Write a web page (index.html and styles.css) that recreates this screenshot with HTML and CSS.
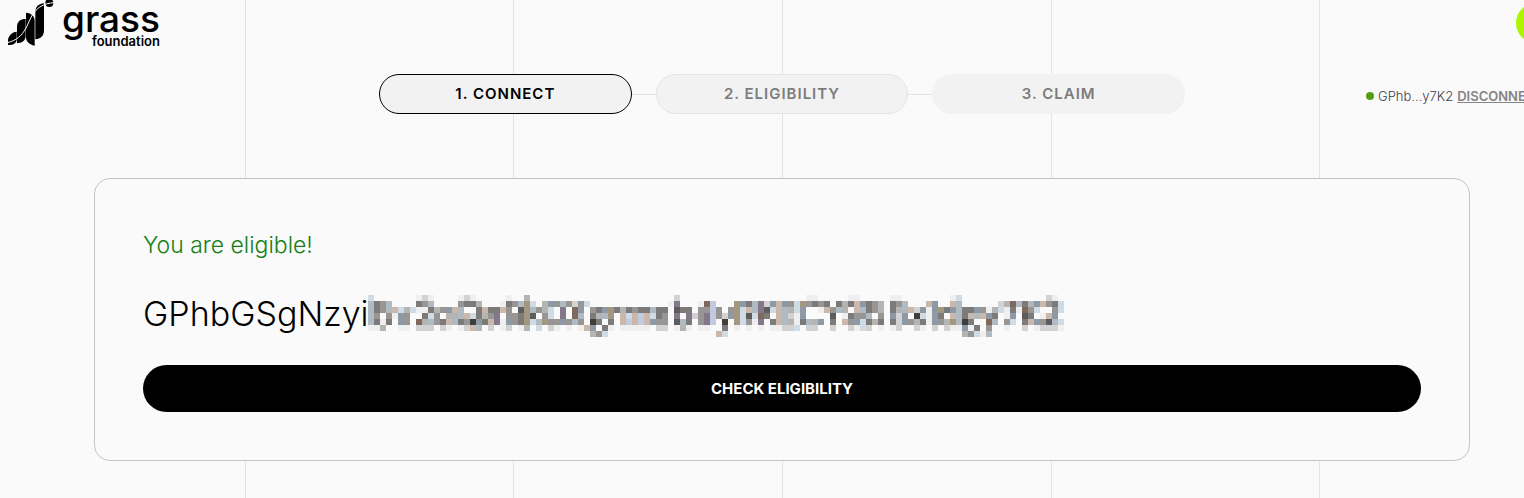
FILE: index.html
```
<!DOCTYPE html>
<html lang="en">
<head>
<meta charset="utf-8">
<title>Grass Foundation</title>
<meta name="viewport" content="width=device-width, initial-scale=1">
<link rel="stylesheet" href="styles.css">
</head>

<body>
<div class="page">

<!--background lines-->
<div class="grid-lines">
	<span></span><span></span><span></span><span></span><span></span><span></span>
</div>

<!--header-->
<header class="header">
	<a class="logo" href="#">
		<svg class="logo-mark" viewBox="24 0 138 138" aria-hidden="true">
			<path d="M24 135V120C25 107 36 96 50 95V120C48 131 40 135 24 135Z"/>
			<path d="M51 130V78C52 65 61 57 77 57V108C76 121 67 129 51 130Z"/>
			<path d="M104 137C88 134 79 126 78 112V38C94 39 103 48 104 62Z"/>
			<path d="M106 118V34C107 20 116 11 132 10V92C131 108 122 116 106 118Z"/>
			<circle cx="148" cy="9" r="12"/>
			<path class="logo-cut" d="M22 128C48 122 65 108 78 84C94 53 102 12 162 8"/>
		</svg>
		<span class="logo-text">
			<span class="logo-name">grass</span>
			<span class="logo-sub">foundation</span>
		</span>
	</a>
	<button class="menu" type="button" aria-label="Menu"></button>
</header>

<!--steps-->
<div class="bar">
	<ol class="steps">
		<li class="step active">1. CONNECT</li>
		<li class="step outlined">2. ELIGIBILITY</li>
		<li class="step">3. CLAIM</li>
	</ol>
	<div class="wallet">
		<span class="dot"></span>
		<span>GPhb...y7K2</span>
		<a class="disconnect" href="#">DISCONNECT</a>
	</div>
</div>

<!--result-->
<main class="card">
	<h1 class="result">You are eligible!</h1>
	<div class="address">
		<span>GPhbGSgNzyi</span>
		<svg class="mosaic" viewBox="0 0 696 42" shape-rendering="crispEdges" aria-hidden="true"></svg>
	</div>
	<button class="check" type="button">CHECK ELIGIBILITY</button>
</main>

</div>
<script src="script.js"></script>
</body>
</html>
```

FILE: styles.css
```
* {
	box-sizing: border-box;
}
body {
	margin: 0;
	background-color: #fafafa;
	color: #000;
	font-family: Inter, "Liberation Sans", sans-serif;
	overflow: hidden;
}
.page {
	position: relative;
	width: calc(100% + 40px);
	min-height: 100vh;
}
.grid-lines {
	position: absolute;
	top: 0;
	bottom: 0;
	left: -24px;
	right: -24px;
	z-index: -1;
	display: grid;
	grid-template-columns: repeat(6, 1fr);
}
.grid-lines span {
	border-left: 1px solid #e4e4e4;
}

.header {
	display: flex;
	justify-content: space-between;
	align-items: flex-start;
	height: 74px;
	padding-left: 8px;
}
.logo {
	display: flex;
	gap: 8px;
	color: #000;
	text-decoration: none;
}
.logo-mark {
	width: 46px;
	height: 46px;
}
.logo-cut {
	fill: none;
	stroke: #fafafa;
	stroke-width: 3;
}
.logo-text {
	display: flex;
	flex-direction: column;
	align-items: flex-end;
}
.logo-name {
	font-size: 37px;
	font-weight: 500;
	line-height: 38px;
}
.logo-sub {
	margin-top: -4px;
	font-size: 13px;
	font-weight: 600;
	line-height: 14px;
}
.menu {
	width: 48px;
	height: 40px;
	margin-top: 3px;
	border: 0;
	border-radius: 20px;
	background-color: #abf600;
}

.bar {
	display: grid;
	grid-template-columns: 1fr 806px 1fr;
	margin-bottom: 64px;
}
.steps {
	grid-column: 2;
	display: grid;
	grid-template-columns: repeat(3, 1fr);
	gap: 24px;
	margin: 0;
	padding: 0;
	list-style: none;
	background: linear-gradient(#e4e4e4, #e4e4e4) center / 90% 1px no-repeat;
}
.step {
	height: 40px;
	border: 1px solid #f2f2f2;
	border-radius: 20px;
	background-color: #f2f2f2;
	color: #7c7c7c;
	font-size: 15px;
	font-weight: 600;
	line-height: 38px;
	letter-spacing: 1px;
	text-align: center;
}
.step.outlined {
	border-color: #e4e4e4;
}
.step.active {
	border-color: #000;
	color: #000;
}
.wallet {
	display: flex;
	justify-content: flex-end;
	align-items: center;
	gap: 4px;
	padding-top: 4px;
	padding-right: 20px;
	color: #3b3b4a;
	font-size: 13px;
	font-weight: 300;
}
.dot {
	width: 8px;
	height: 8px;
	border-radius: 50%;
	background-color: #54a014;
}
.disconnect {
	color: #848484;
	font-weight: 600;
}

.card {
	margin: 0 94px;
	padding: 48px;
	border: 1px solid #c4c4c4;
	border-radius: 16px;
	background-color: #fafafa;
}
.result {
	margin: 0 0 24px;
	color: #168016;
	font-size: 23px;
	font-weight: 300;
	line-height: 36px;
}
.address {
	display: flex;
	height: 54px;
	margin-bottom: 24px;
	font-size: 34px;
	font-weight: 300;
	line-height: 54px;
}
.mosaic {
	width: 696px;
	height: 42px;
	margin-top: 8px;
}
.check {
	display: block;
	width: 100%;
	height: 47px;
	border: 0;
	border-radius: 24px;
	background-color: #000;
	color: #fff;
	font-family: inherit;
	font-size: 15px;
	font-weight: 700;
}
```

FILE: script.js
```
// one character per 6px cell of the masked part of the address
var shades = {
	1: '#efefef', 2: '#d2d2d2', 3: '#b4b4b2', 4: '#989694', 5: '#7d7b7a', 6: '#5c5b5e', 7: '#403e3a',
	b: '#cfdce6', c: '#8d99a5', d: '#b0bac2', l: '#c2cae0', t: '#cbb8aa', y: '#a3977f', p: '#82788a', n: '#80695c'
};

var rows = [
	'b.......121....121.....1..3...' + '.....................2.......' + '..............11.....11.....1' + '1........1b..............21.',
	'd54d....54d....4553...154dyb.3' + 'c4d424b.............1p...1nl.' + '..yc5dp2ctc4by4545.535tc543.5' + '4d...tc..td......23nd53ct45b',
	'd54dtb3b11534ctd..5t55t4.6yd43' + 'b.p.nc.45cy535455d55.655.44l4' + '.4ybtdp6btd3bc..1t4d3.td543.5' + '3dt2c1cy5cd55c413b151n4b..4b',
	'd4.41c4..5b4.33dtb534p.445y6.4' + 'b.p.nd.53dy.tbtltb54.p.p24pl4' + '2cyb6bn5.td21c....6.1544d.4.c' + '2c.7b1c5.td5tdtc5.1c.65.1tc.',
	'd515.c4.n3d45td547c5tp1c45ybdy' + '44c4d4.75.5.tltltc44.6d5.4pl.' + '7.yb41p.5td315d3c.5.t4cb535.5' + '2c4351c43yd75..nd.4b.5tc46db',
	'113..11.222.21.12td.2.12.13.b.' + '21.1.1tc.51.11111.22.131.11..' + '5.1.1.1.1122b.22..2..21b2.1.1' + '2..21.2.211c15.4..1..2.12221',
	'..............................' + '.......34b..................t' + 'b............................' + '...........34b1d............'
];

var cells = '';
rows.forEach(function (row, y) {
	row.split('').forEach(function (key, x) {
		if (shades[key]) {
			cells += '<rect x="' + x * 6 + '" y="' + y * 6 + '" width="6" height="6" fill="' + shades[key] + '"/>';
		}
	});
});
document.querySelector('.mosaic').innerHTML = cells;
```
